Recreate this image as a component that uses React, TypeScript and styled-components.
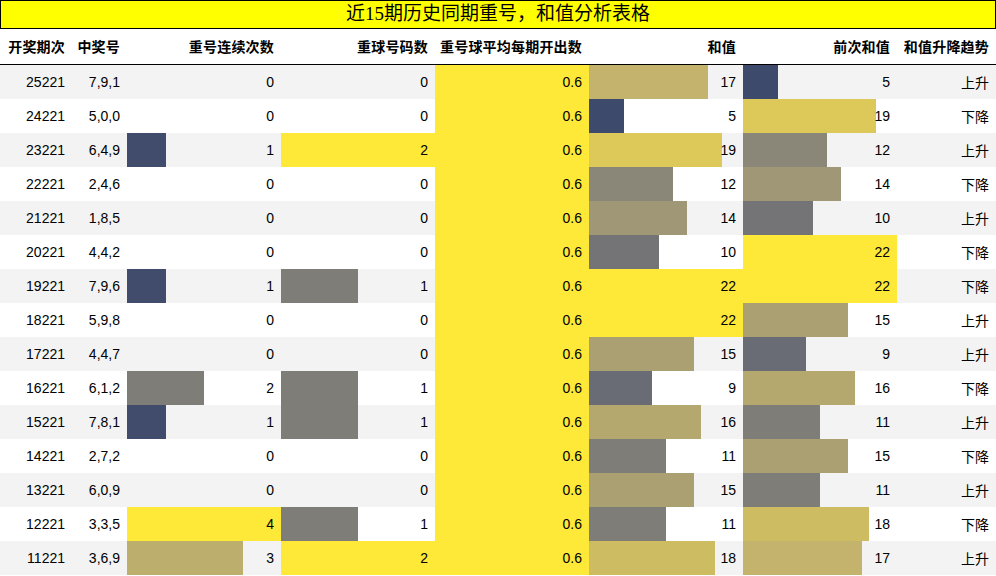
import styled, { createGlobalStyle } from 'styled-components';

const GlobalStyle = createGlobalStyle`
  html, body {
    margin: 0;
    padding: 0;
    background: #ffffff;
  }
  body {
    font-family: "Liberation Sans", "Noto Sans CJK SC", sans-serif;
    color: #000000;
  }
`;

// cividis-like scale, sampled from the reference
const STOPS: [number, [number, number, number]][] = [
  [0, [0, 34, 78]],
  [0.2, [57, 71, 108]],
  [0.25, [65, 76, 108]],
  [0.41, [105, 108, 116]],
  [0.5, [127, 125, 120]],
  [0.545, [138, 135, 121]],
  [0.636, [160, 151, 118]],
  [0.68, [170, 160, 114]],
  [0.727, [181, 168, 110]],
  [0.773, [195, 179, 108]],
  [0.818, [205, 188, 98]],
  [0.864, [221, 201, 90]],
  [1, [254, 232, 56]],
];

const scaleColor = (t: number) => {
  for (let i = 1; i < STOPS.length; i++) {
    const [t1, c1] = STOPS[i];
    const [t0, c0] = STOPS[i - 1];
    if (t <= t1) {
      const k = (t - t0) / (t1 - t0);
      const c = c0.map((v, j) => Math.round(v + (c1[j] - v) * k));
      return `rgb(${c[0]},${c[1]},${c[2]})`;
    }
  }
  return 'rgb(254,232,56)';
};

type Row = [string, string, number, number, number, number, number, string];

const ROWS: Row[] = [
  ['25221', '7,9,1', 0, 0, 0.6, 17, 5, '上升'],
  ['24221', '5,0,0', 0, 0, 0.6, 5, 19, '下降'],
  ['23221', '6,4,9', 1, 2, 0.6, 19, 12, '上升'],
  ['22221', '2,4,6', 0, 0, 0.6, 12, 14, '下降'],
  ['21221', '1,8,5', 0, 0, 0.6, 14, 10, '上升'],
  ['20221', '4,4,2', 0, 0, 0.6, 10, 22, '下降'],
  ['19221', '7,9,6', 1, 1, 0.6, 22, 22, '下降'],
  ['18221', '5,9,8', 0, 0, 0.6, 22, 15, '上升'],
  ['17221', '4,4,7', 0, 0, 0.6, 15, 9, '上升'],
  ['16221', '6,1,2', 2, 1, 0.6, 9, 16, '下降'],
  ['15221', '7,8,1', 1, 1, 0.6, 16, 11, '上升'],
  ['14221', '2,7,2', 0, 0, 0.6, 11, 15, '下降'],
  ['13221', '6,0,9', 0, 0, 0.6, 15, 11, '上升'],
  ['12221', '3,3,5', 4, 1, 0.6, 11, 18, '下降'],
  ['11221', '3,6,9', 3, 2, 0.6, 18, 17, '上升'],
];

const HEADERS = ['开奖期次', '中奖号', '重号连续次数', '重球号码数', '重号球平均每期开出数', '和值', '前次和值', '和值升降趋势'];

// max of each bar column (和值 and 前次和值 share a scale)
const BAR_MAX: Record<number, number> = { 2: 4, 3: 2, 4: 0.6, 5: 22, 6: 22 };

const Sheet = styled.div`
  width: 996px;
`;

const TitleBar = styled.div`
  box-sizing: border-box;
  height: 29px;
  border: 1px solid #000000;
  background: #ffff00;
  text-align: center;
  font-family: "Liberation Serif", "Noto Sans CJK SC", serif;
  font-size: 19px;
  line-height: 26px;
`;

const Grid = styled.div`
  display: grid;
  grid-template-columns: 72px 55px repeat(5, 154px) 99px;
  grid-template-rows: 36px;
  grid-auto-rows: 34px;
`;

const HeaderCell = styled.div`
  box-sizing: border-box;
  display: flex;
  align-items: center;
  justify-content: flex-end;
  padding: 0 7px 1px 0;
  border-bottom: 1px solid #000000;
  font-weight: bold;
  font-size: 14px;
  letter-spacing: 0.2px;
  white-space: nowrap;
`;

const Cell = styled.div<{ $odd: boolean }>`
  position: relative;
  display: flex;
  align-items: center;
  justify-content: flex-end;
  padding-right: 7px;
  background: ${(p) => (p.$odd ? '#f3f3f3' : '#ffffff')};
  font-size: 14px;
  white-space: nowrap;
`;

const Bar = styled.div`
  position: absolute;
  left: 0;
  top: 0;
  bottom: 0;
`;

const Value = styled.span`
  position: relative;
`;

export default function App() {
  return (
    <>
      <GlobalStyle />
      <Sheet>
        <TitleBar>近15期历史同期重号，和值分析表格</TitleBar>
        <Grid>
          {HEADERS.map((h) => (
            <HeaderCell key={h}>{h}</HeaderCell>
          ))}
          {ROWS.map((row, r) =>
            row.map((v, c) => {
              const max = BAR_MAX[c];
              const t = max && typeof v === 'number' ? v / max : 0;
              return (
                <Cell key={`${r}-${c}`} $odd={r % 2 === 0}>
                  {t > 0 && <Bar style={{ width: `${t * 100}%`, background: scaleColor(t) }} />}
                  <Value>{v}</Value>
                </Cell>
              );
            })
          )}
        </Grid>
      </Sheet>
    </>
  );
}
